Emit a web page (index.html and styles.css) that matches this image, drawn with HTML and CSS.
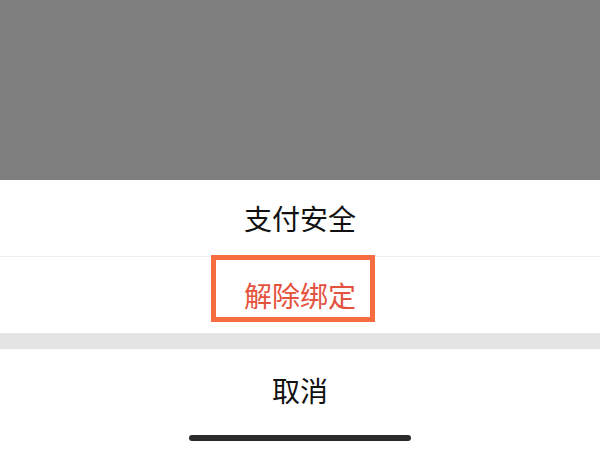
FILE: index.html
```html
<!DOCTYPE html>
<html lang="zh">
<head>
<meta charset="utf-8">
<link rel="stylesheet" href="styles.css">
</head>
<body>
<div class="screen">
  <div class="mask"></div>
  <div class="sheet">
    <div class="item">支付安全</div>
    <div class="divider"></div>
    <div class="item item-danger">
      <span>解除绑定</span>
      <div class="highlight"></div>
    </div>
    <div class="gap"></div>
    <div class="item item-cancel">取消</div>
    <div class="home">
      <div class="home-bar"></div>
    </div>
  </div>
</div>
</body>
</html>
```
FILE: styles.css
```css
html, body {
  margin: 0;
  padding: 0;
}
body {
  width: 600px;
  height: 450px;
  overflow: hidden;
  font-family: "Noto Sans CJK SC", "Noto Sans", sans-serif;
  background: #ffffff;
}
.screen {
  display: flex;
  flex-direction: column;
  width: 600px;
  height: 450px;
}
.mask {
  height: 180px;
  background: #7f7e7f;
}
.sheet {
  flex: 1;
  display: flex;
  flex-direction: column;
  background: #ffffff;
}
.item {
  height: 76px;
  display: flex;
  align-items: center;
  justify-content: center;
  font-size: 28px;
  color: #111111;
}
.divider {
  height: 1px;
  background: #ededed;
}
.item-danger {
  position: relative;
  color: #e4533d;
}
.highlight {
  position: absolute;
  left: 211px;
  top: -2px;
  width: 154px;
  height: 57px;
  border: 5px solid #f76c40;
}
.gap {
  height: 16px;
  background: #e5e4e5;
}
.item-cancel {
  height: 81px;
}
.home {
  flex: 1;
  display: flex;
  justify-content: center;
  padding-top: 5px;
}
.home-bar {
  width: 222px;
  height: 6px;
  border-radius: 3px;
  background: #2b2b2b;
}
```
